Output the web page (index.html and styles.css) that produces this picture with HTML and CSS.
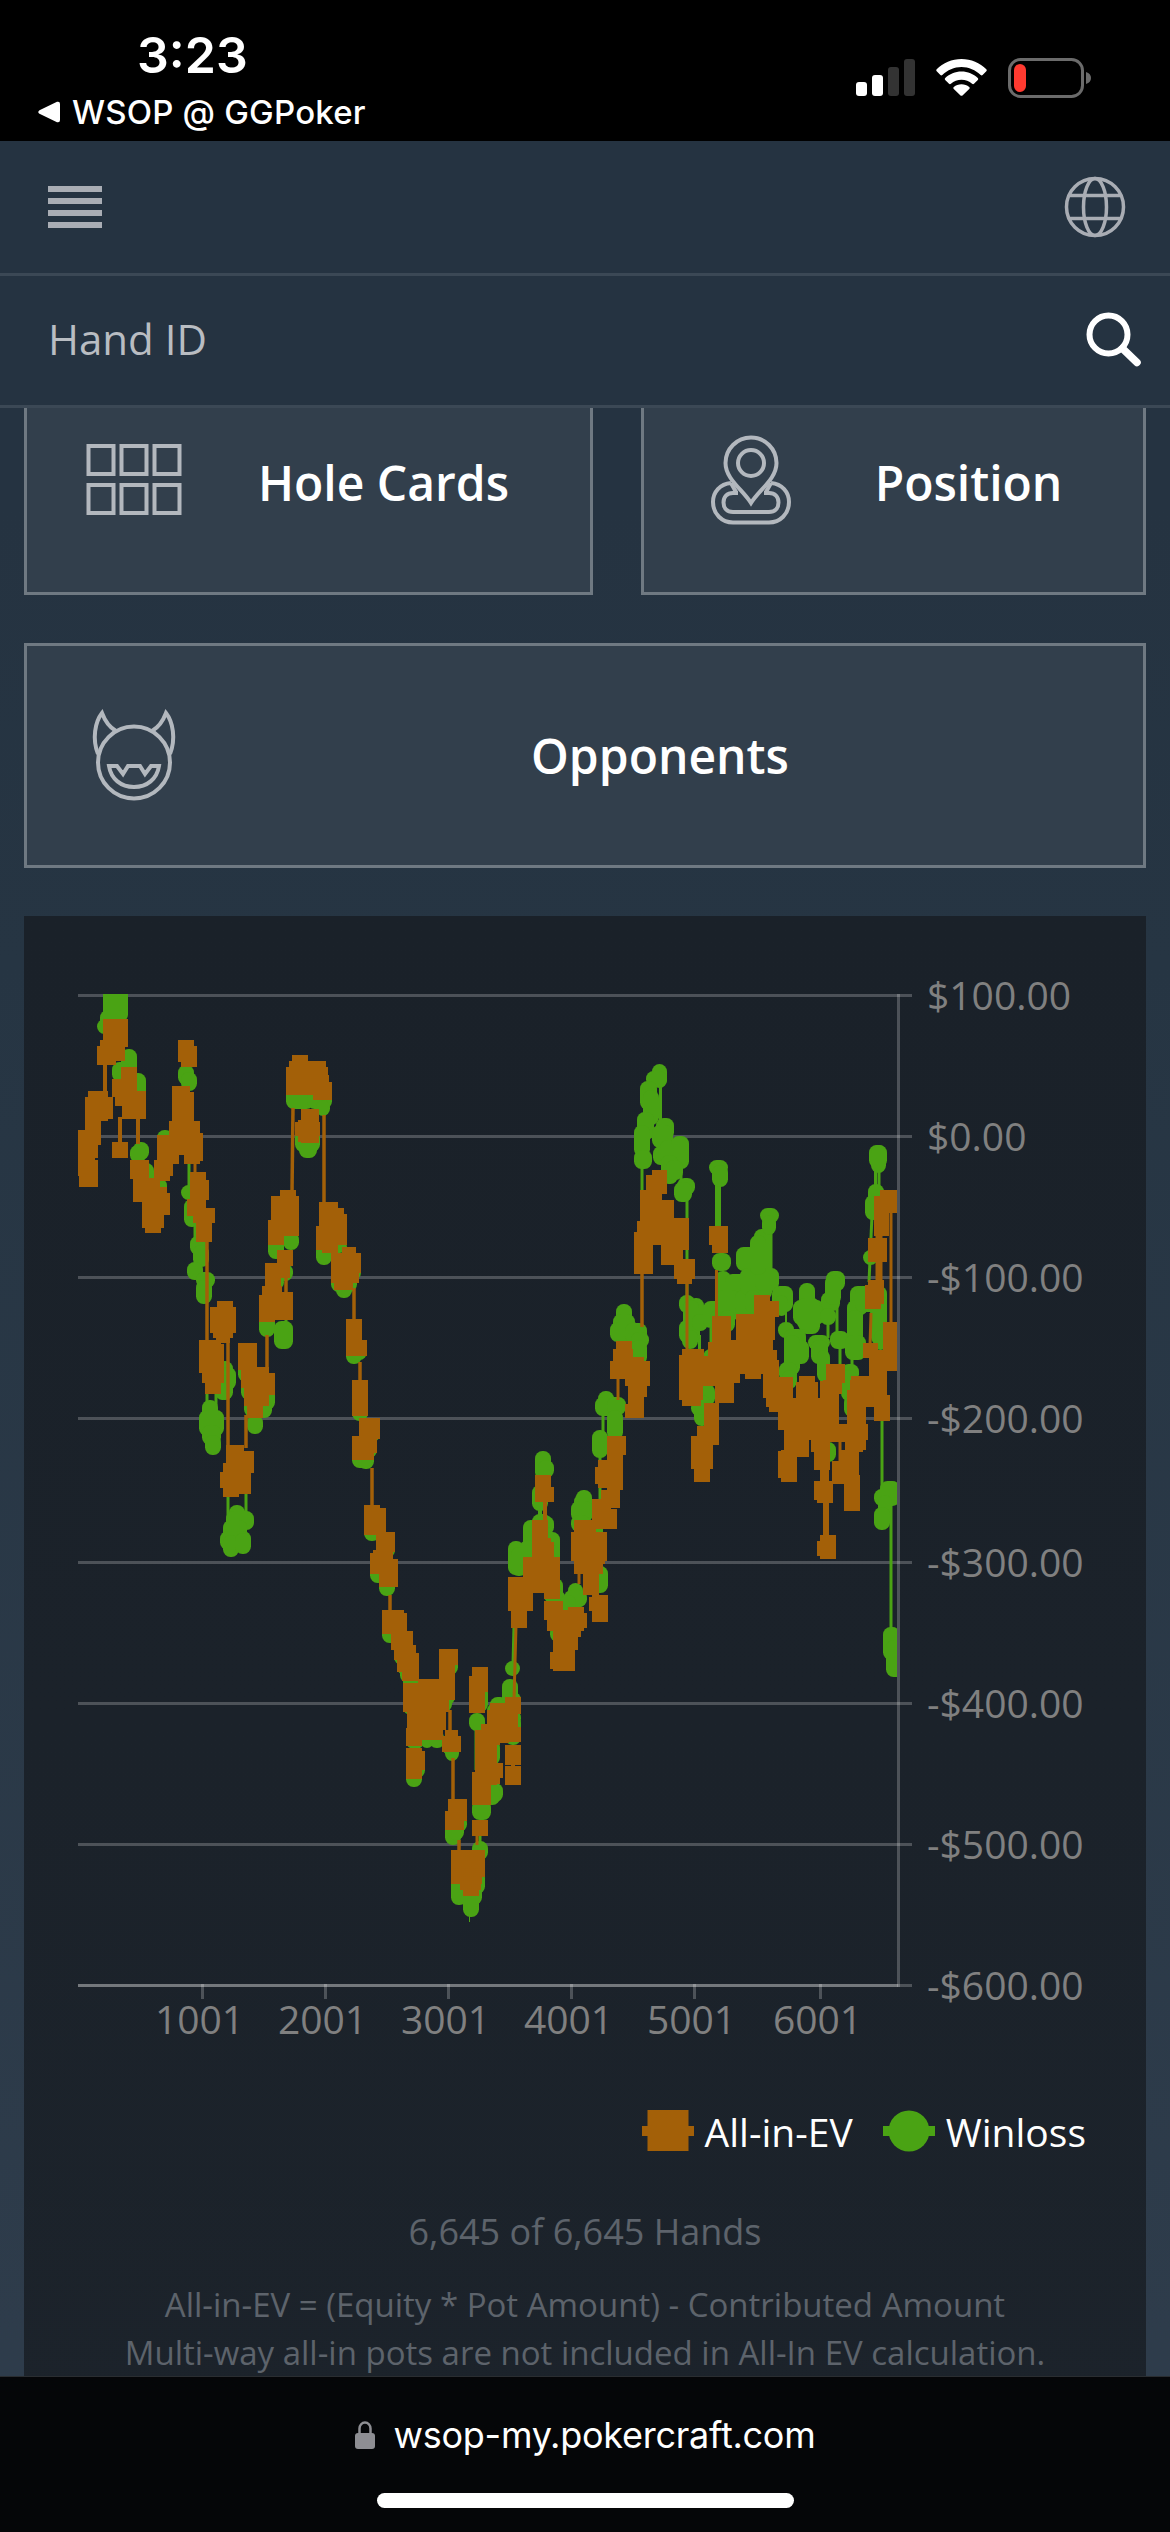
FILE: index.html
```html
<!DOCTYPE html>
<html lang="en">
<head>
    <meta charset="UTF-8">
    <meta name="viewport" content="width=device-width, initial-scale=1.0">
    <title>PokerCraft</title>
    <link rel="stylesheet" href="styles.css">
</head>
<body>

<!-- Status bar -->
<div class="status-bar">
    <div class="status-left">
        <div class="clock">3:23</div>
        <div class="back-app">
            <svg width="22" height="22" viewBox="0 0 22 22"><path d="M1.5 9.2 19 .8Q22 0 22 3v16q0 3-3 2.200L1.500 12.800Q-1 11 1.500 9.200z" fill="#fff"/></svg>
            <span>WSOP @ GGPoker</span>
        </div>
    </div>
    <div class="status-icons">
        <svg width="59" height="38" viewBox="0 0 59 38" fill="#fff">
            <rect x="0" y="24" width="11" height="14" rx="3"/>
            <rect x="16" y="17" width="11" height="21" rx="3"/>
            <rect x="32" y="9" width="11" height="29" rx="3" fill="#333"/>
            <rect x="48" y="1" width="11" height="37" rx="3" fill="#333"/>
        </svg>
        <svg width="51" height="38" viewBox="0 0 51 38" fill="#fff">
            <path d="M25.500 1C35 1 44 4.800 50.300 11.300q.9 1 0 2l-3.700 3.700q-.9.900-1.900 0C39.500 12 32.800 9 25.500 9S11.500 12 6.300 17q-1 .9-1.900 0L.7 13.300q-.9-1 0-2C7 4.800 16 1 25.500 1z"/>
            <path d="M25.500 13.500c6.200 0 12 2.400 16.300 6.500q1 1 0 2l-3.800 3.800q-.9.900-1.900 0c-2.900-2.600-6.600-4.100-10.600-4.100s-7.700 1.500-10.600 4.100q-1 .9-1.900 0L9.200 22q-1-1 0-2c4.300-4.100 10.100-6.500 16.300-6.500z"/>
            <path d="M25.500 26.200c2.900 0 5.600 1 7.700 2.800q1 .9 0 1.900l-6.700 6.500q-1 .9-2 0l-6.700-6.500q-1-1 0-1.900c2.100-1.800 4.800-2.800 7.700-2.800z"/>
        </svg>
        <svg width="84" height="40" viewBox="0 0 84 40">
            <rect x="1.500" y="1.500" width="73" height="37" rx="11" fill="none" stroke="#6b6b6b" stroke-width="3"/>
            <path d="M78 14q5 1.500 5 6t-5 6z" fill="#6b6b6b"/>
            <rect x="6" y="6" width="12" height="28" rx="6" fill="#ff3a30"/>
        </svg>
    </div>
</div>

<header class="top-bar">
    <div class="menu-btn"><i></i><i></i><i></i><i></i></div>
    <svg width="62" height="62" viewBox="0 0 62 62" fill="none" stroke="#a9adb4" stroke-width="3.500">
        <circle cx="31" cy="31" r="28.500"/>
        <ellipse cx="31" cy="31" rx="11.500" ry="28.500"/>
        <path d="M5 19.500h52M5 42.500h52"/>
    </svg>
</header>

<div class="search-bar">
    <span>Hand ID</span>
    <svg width="56" height="56" viewBox="0 0 56 56" fill="none" stroke="#fff">
        <circle cx="23.500" cy="23.500" r="19" stroke-width="6"/>
        <path d="M37.500 37.500 52 51.500" stroke-width="7.500" stroke-linecap="round"/>
    </svg>
</div>

<main class="content">
    <div class="cards">
        <div class="card">
            <svg class="card-icon" viewBox="0 0 96 96">
                <rect x="2.500" y="14" width="25" height="28"/>
                <rect x="35.500" y="14" width="25" height="28"/>
                <rect x="68.500" y="14" width="25" height="28"/>
                <rect x="2.500" y="53" width="25" height="28"/>
                <rect x="35.500" y="53" width="25" height="28"/>
                <rect x="68.500" y="53" width="25" height="28"/>
            </svg>
            <span>Hole Cards</span>
        </div>
        <div class="card">
            <svg class="card-icon" viewBox="0 0 96 96">
                <path d="M48 71C40 58 22.500 47 22.500 31a25.500 25.500 0 0 1 51 0C73.500 47 56 58 48 71z"/>
                <circle cx="48" cy="31" r="13"/>
                <path d="M28 51C17 52 10 60 10 70c0 12 9 20.500 20 20.500h36c11 0 20-8.500 20-20.500 0-10-7-18-18-19"/>
                <path d="M35 61h-5c-6 0-9.500 4-9.500 9.500S24 80 30 80h36c6 0 9.500-4 9.500-9.500S72 61 66 61h-5M28 51l5 9M68 51l-5 9"/>
            </svg>
            <span>Position</span>
        </div>
        <div class="card wide">
            <svg class="card-icon" viewBox="0 0 96 96">
                <circle cx="48" cy="57.500" r="36"/>
                <path d="M12 49C6 34 9 17 16 8c3 8 7 14 14 18M84 49c6-15 3-32-4-41-3 8-7 14-14 18"/>
                <path d="M23 61h8l6 8 5-8h12l5 8 6-8h8c-2 13-12 21-25 21S25 74 23 61z"/>
            </svg>
            <span>Opponents</span>
        </div>
    </div>

    <section class="chart-panel">
        <svg id="chart" width="1050" height="1110" viewBox="0 0 1050 1110">
            <defs><clipPath id="plot"><rect x="18" y="24" width="819" height="993"/></clipPath></defs>
            <g id="grid"></g>
            <g clip-path="url(#plot)" id="series"></g>
        </svg>
        <div class="legend">
            <div class="legend-item">
                <svg width="52" height="42" viewBox="0 0 52 42" fill="#a36008"><path d="M0 16h52v10H0z"/><path d="M5.500 0h41v41h-41z"/></svg>
                <span>All-in-EV</span>
            </div>
            <div class="legend-item">
                <svg width="52" height="42" viewBox="0 0 52 42" fill="#4aa314"><path d="M0 16h52v10H0z"/><circle cx="26" cy="21" r="20.500"/></svg>
                <span>Winloss</span>
            </div>
        </div>
        <p class="hands">6,645 of 6,645 Hands</p>
        <p class="note">All-in-EV = (Equity * Pot Amount) - Contributed Amount<br>Multi-way all-in pots are not included in All-In EV calculation.</p>
    </section>
</main>

<footer class="browser-bar">
    <div class="url">
        <svg width="21" height="28" viewBox="0 0 21 28"><rect x="0" y="12" width="20" height="16" rx="3" fill="#8e8e93"/><path d="M4.500 13V7.500a5.500 6 0 0 1 11 0V13" fill="none" stroke="#8e8e93" stroke-width="2.500"/></svg>
        <span>wsop-my.pokercraft.com</span>
    </div>
    <div class="home-indicator"></div>
</footer>

<script>
    const yAxis = [
        ["$100.00", 25.5], ["$0.00", 166.5], ["-$100.00", 307.5], ["-$200.00", 448.5],
        ["-$300.00", 592.5], ["-$400.00", 733.5], ["-$500.00", 874.5], ["-$600.00", 1015.5]
    ];
    const xAxis = [["1001", 142.5], ["2001", 265.5], ["3001", 388.5], ["4001", 511.5], ["5001", 634.5], ["6001", 760.5]];

    // marker areas: left, top, right, bottom
    const winloss = [
        [43,10,68,52],[37,49,55,64],[40,40,66,60],[61,79,77,110],[52,92,70,112],[70,103,86,128],
        [73,172,89,190],[70,175,86,193],[78,193,94,215],[90,208,107,228],[97,160,113,180],
        [118,95,134,115],[121,102,137,121],[121,215,137,230],[124,229,140,257],[130,266,146,285],[133,275,149,297],
        [127,292,143,310],[136,302,155,318],[136,310,152,334],[157,391,173,430],[160,397,176,420],[155,405,170,430],
        [142,430,158,460],[139,440,164,466],[142,455,161,475],[145,465,161,485],
        [169,535,185,560],[166,541,194,560],[163,550,187,575],[160,561,191,580],[163,565,179,587],[175,563,191,584],
        [178,386,194,412],[181,405,197,430],[187,445,203,464],[199,415,215,440],[196,430,212,448],[184,425,200,447],
        [199,340,215,367],[214,351,233,379],[217,294,233,311],[208,305,224,320],[208,266,224,289],[223,262,239,280],
        [226,115,254,139],[247,120,272,139],[256,130,270,146],[235,160,260,182],[239,170,257,188],
        [256,273,272,295],[262,270,282,285],[271,270,287,283],[271,300,297,322],[276,310,292,328],[281,296,301,310],
        [286,375,302,394],[291,375,307,390],[292,430,308,451],[299,455,320,472],[292,475,312,498],[298,480,314,499],[302,470,317,488],
        [304,550,320,571],[319,570,335,588],[310,592,326,613],[319,597,335,626],[322,595,338,616],
        [322,650,338,673],[331,665,347,682],[334,675,350,695],[337,685,353,705],[340,695,356,713],[343,700,359,720],
        [343,720,359,745],[347,735,363,753],[346,760,364,779],[360,762,374,778],[369,762,385,778],[379,720,395,735],
        [376,725,392,742],[370,740,386,754],[382,685,398,705],[346,790,362,817],[349,790,365,808],[382,770,401,785],[385,770,399,791],
        [385,845,401,875],[391,845,407,862],[388,850,404,870],[391,905,407,935],[409,900,425,924],[400,910,422,935],[403,910,419,947],
        [412,871,428,890],[409,743,425,761],[412,715,428,742],[430,727,448,745],[427,733,443,750],[442,709,458,735],[445,722,461,740],
        [445,691,460,706],[445,740,461,756],[445,745,461,775],[426,770,440,795],[427,813,443,832],[424,815,440,835],[412,830,431,850],
        [448,571,464,605],[451,577,467,606],[463,550,479,590],[460,570,475,600],[478,546,494,565],[472,544,491,560],[483,562,500,590],[484,575,500,595],
        [472,515,488,541],[475,481,491,510],[478,490,494,508],[487,608,503,632],[484,620,505,633],[508,613,523,640],[504,620,527,637],
        [500,625,516,642],[490,655,506,672],[514,524,532,545],[516,520,532,540],[511,531,533,552],[511,545,530,562],[527,550,543,572],[532,596,548,623],
        [532,460,548,488],[538,421,554,440],[535,427,563,446],[547,427,566,445],[547,440,563,470],
        [556,334,572,365],[553,344,575,365],[550,352,580,372],[565,353,587,373],[571,362,589,378],[571,370,587,395],
        [592,94,607,118],[586,101,607,117],[580,111,597,140],[583,120,599,155],[577,142,594,170],[574,155,590,187],[574,180,592,199],
        [596,148,614,170],[592,155,613,178],[593,176,620,195],[600,170,618,195],[611,166,629,199],[601,185,618,214],[606,190,623,210],
        [617,208,635,225],[614,212,632,232],[619,325,635,343],[628,328,644,360],[623,330,639,360],[619,350,640,373],[622,360,638,379],
        [632,344,648,361],[643,331,668,358],[650,340,668,363],[643,379,659,400],[631,430,646,446],[634,420,650,456],[640,414,655,436],[635,425,650,445],
        [649,190,668,205],[652,195,668,217],[652,283,671,301],[655,301,671,335],[665,304,690,340],[655,320,680,350],[660,340,675,362],[675,320,700,345],
        [676,277,697,301],[694,259,712,330],[700,238,719,253],[702,245,716,265],[680,298,712,325],[695,298,719,321],[685,320,700,343],[690,265,706,305],
        [712,316,733,342],[715,325,728,346],[718,352,734,368],[724,359,746,380],[728,370,749,394],[724,365,740,405],[719,392,737,412],[722,400,737,419],
        [739,313,755,340],[733,330,764,355],[739,340,760,364],[737,328,760,360],[748,365,770,380],[751,370,768,394],[757,380,770,412],
        [761,322,780,341],[766,301,785,321],[765,305,781,335],[760,338,776,355],[770,361,789,379],[790,316,808,345],[787,330,803,365],[787,340,803,380],
        [785,365,806,390],[781,394,799,412],[781,400,797,431],[784,425,800,447],[759,445,770,455],[760,472,776,492],[795,316,820,342],
        [808,330,824,345],[811,316,827,345],[811,325,827,375],[814,360,827,380],[803,280,818,295],[805,225,821,250],[808,214,824,235],[809,175,827,198],[811,175,826,203],
        [814,519,835,536],[820,511,840,536],[818,525,832,550],[814,537,830,560],[823,657,840,690],[826,670,845,707]
    ];
    const allInEv = [
        [18,160,41,175],[18,160,38,188],[18,175,35,206],[19,190,38,217],[28,121,48,151],[47,127,53,149],[25,127,41,175],
        [43,49,68,77],[40,70,65,91],[37,76,56,95],[52,172,68,188],[61,97,77,122],[52,109,67,127],[55,121,86,136],[62,134,86,149],
        [70,190,89,209],[73,208,100,232],[92,217,107,230],[82,223,110,245],[82,230,104,258],[85,250,101,263],
        [97,165,113,196],[94,190,110,211],[94,190,113,206],[109,157,124,185],[100,166,119,194],[112,116,130,161],[113,122,134,152],
        [109,151,140,184],[124,163,143,191],[124,183,140,194],[118,70,134,92],[121,76,137,97],
        [130,202,146,245],[130,210,149,230],[127,229,143,246],[133,238,155,253],[136,247,152,272],
        [139,370,161,403],[145,374,164,395],[142,395,164,413],[145,410,161,424],[157,331,173,345],[150,337,176,363],[153,355,173,368],[156,360,170,373],
        [166,475,184,490],[166,481,194,503],[163,493,191,513],[160,502,191,518],[163,515,191,524],[163,520,179,527],
        [178,373,197,400],[181,397,209,418],[184,403,215,425],[184,420,209,436],[187,430,203,448],
        [199,325,230,350],[199,330,215,352],[202,316,222,335],[205,293,221,330],[205,293,230,308],[217,280,233,296],[220,322,233,350],
        [211,226,239,266],[220,220,236,230],[208,250,224,275],[232,85,248,95],[229,91,266,105],[226,97,268,122],[226,115,253,125],[253,105,269,130],[257,112,272,130],
        [241,139,259,173],[235,152,260,166],[238,150,259,172],[259,232,278,245],[259,238,284,260],[256,256,274,280],[259,244,287,275],[262,270,278,283],
        [282,277,296,290],[271,283,301,303],[271,295,299,313],[274,305,293,320],[286,349,302,386],[289,370,307,386],[292,410,308,446],
        [299,448,320,469],[292,466,317,483],[292,475,314,490],[304,535,320,565],[304,538,326,563],[316,562,335,582],[310,583,330,604],[313,580,333,600],[319,589,338,617],
        [322,640,344,664],[325,643,347,663],[331,661,353,680],[334,675,356,690],[337,683,359,702],[342,700,359,711],
        [343,713,380,740],[358,709,395,728],[379,679,398,695],[379,679,395,730],[343,713,389,742],[347,740,386,760],[346,758,383,770],[346,768,362,776],
        [346,778,362,809],[349,781,365,800],[382,766,401,782],[385,760,398,770],[388,829,407,851],[385,841,404,860],
        [391,880,425,907],[391,905,422,914],[400,912,421,920],[403,918,419,926],[412,697,428,722],[409,706,425,743],
        [421,754,440,775],[415,760,437,803],[412,802,437,815],[412,812,431,835],[415,793,443,808],[434,793,440,814],
        [430,733,460,743],[427,740,449,773],[445,727,461,744],[427,744,458,758],[445,757,461,772],[445,775,461,795],[445,796,461,815],
        [412,850,428,866],[451,640,467,658],[448,607,473,641],[463,587,484,623],[472,550,488,588],[475,568,491,590],[478,572,494,590],
        [470,587,500,623],[484,620,500,629],[475,505,491,532],[478,517,494,532],
        [484,631,503,650],[487,640,524,661],[493,643,527,658],[508,637,524,650],[493,660,521,667],[493,665,518,680],[490,682,515,699],[493,675,515,701],
        [529,627,547,641],[532,625,548,652],[511,562,547,591],[514,550,536,565],[514,590,543,604],[523,590,545,594],[523,600,539,625],
        [532,529,551,556],[535,539,557,559],[541,520,560,538],[547,490,563,520],[547,466,566,485],[535,497,560,514],[538,490,560,518],[547,480,563,500],
        [556,371,572,380],[553,379,573,400],[550,391,587,409],[571,387,584,410],[565,391,590,416],[568,405,587,427],[565,434,584,448],[568,420,584,448],
        [574,262,593,304],[577,251,598,275],[580,220,602,265],[586,205,607,224],[592,200,607,212],[598,230,614,275],[602,248,629,280],[601,275,623,295],
        [614,289,635,309],[617,300,632,314],[619,385,643,430],[622,379,644,392],[622,425,641,436],
        [637,386,656,416],[652,346,671,372],[648,372,670,415],[655,370,680,413],[655,405,674,433],[676,344,715,370],[679,352,713,404],
        [694,325,710,345],[694,331,719,347],[670,370,690,395],[685,400,701,409],[709,380,717,400],[703,390,719,428],[706,407,733,437],[709,432,727,442],
        [644,433,659,475],[637,456,655,475],[631,466,653,499],[634,490,650,512],[649,256,668,275],[652,270,668,283],
        [718,437,734,460],[719,407,733,450],[739,406,755,420],[736,412,758,440],[733,428,765,457],[724,450,749,487],[718,481,737,508],[721,480,737,512],
        [763,410,782,424],[766,394,785,413],[760,411,779,454],[749,454,770,470],[770,454,787,472],[751,465,770,482],[754,480,770,500],
        [760,497,769,513],[754,511,773,530],[757,520,773,533],[760,565,776,589],[757,571,775,586],
        [791,406,818,437],[787,420,803,460],[790,410,806,480],[785,454,808,470],[785,465,803,482],[772,491,797,514],[779,484,798,500],[781,480,799,507],[784,505,800,541],
        [803,406,827,436],[816,380,827,440],[814,425,830,451],[803,373,818,388],[809,388,820,406],[805,315,821,339],[808,310,824,334],
        [808,268,827,292],[814,226,829,266],[814,228,837,243],[820,220,837,243],[823,352,837,396],[827,390,837,401]
    ];
    // connectors between marker areas: x1, y1, x2, y2, width
    const winlossLines = [
        [129,190,129,218,3],[135,255,135,270,3],[147,420,147,435,3],[156,420,156,435,3],[168,520,168,548,3],[186,520,186,548,3],
        [409.5,940,409.5,952,1],[420,860,420,875,3],[416,755,416,800,3],[454,655,453,695,3],[480,535,480,550,4],[540,510,540,570,3],
        [543,440,543,465,3],[540,484,540,497,3],[582,190,582,222,3],[600.5,112,600.5,155,3],[621,195,621,212,3],[627,228,627,335,3],
        [639.5,365,639.5,385,3],[651,358,651,385,3],[658,210,658,260,6],[711,250,711,320,3],[726,340,726,355,2],[768,350,768,368,3],[777,335,777,365,3],
        [780,378,780,398,3],[792,388,792,398,3],[812,245,809,312,3],[815.5,198,815.5,218,3],[819,198,819,218,3],[818.5,262,818.5,272,3],
        [822,450,822,520,3],[831,535,831,662,3],[226,345,226,355,3]
    ];
    const evLines = [
        [45,92,45,124,4],[60,147,60,174,4],[78,147,78,174,4],[135,190,135,204,3],[147,270,147,372,3.5],[168,370,168,478,3.5],[186,445,186,478,3.5],
        [207,365,207,402,3.5],[226,305,226,324,3.5],[233,138,232,222,3.5],[264,145,264,234,3.5],[294,318,294,352,3.5],[300,392,300,412,3.5],
        [312,498,312,537,3.5],[330,625,330,642,3.5],[390,740,390,762,3.5],[393,788,393,832,3.5],[399,870,399,882,3.5],[417,864,417,875,3],
        [453,793,453,798,4],[456,655,454,730,3],[485,530,485,552,4],[519,602,519,614,3],[558,405,558,430,3],[582,300,582,357,3.5],[627,312,627,382,3],
        [656.5,300,656.5,348,3],[766,530,766,567,6],[777.5,430,777.5,456,3],[780,470,780,492,3],[811,343,810,376,3],[819,265,819,312,7],[831,240,831,355,3]
    ];

    function rects(list, color, radius) {
        return list.map(([l, t, r, b]) =>
            `<rect x="${l}" y="${t}" width="${r - l}" height="${b - t}" rx="${radius}" fill="${color}"/>`).join('');
    }

    function lines(list, color) {
        return list.map(([x1, y1, x2, y2, w]) =>
            `<line x1="${x1}" y1="${y1}" x2="${x2}" y2="${y2}" stroke="${color}" stroke-width="${w}"/>`).join('');
    }

    function drawGrid() {
        let out = '';
        yAxis.forEach(([label, y]) => {
            out += `<line class="grid-line" x1="18" y1="${y}" x2="852" y2="${y}"/>`;
            out += `<text x="867" y="${y + 14}">${label}</text>`;
        });
        out += '<line class="grid-line" x1="838.5" y1="24" x2="838.5" y2="1017"/>';
        out += '<line class="grid-line" x1="18" y1="1015.5" x2="838" y2="1015.5"/>';
        xAxis.forEach(([label, x]) => {
            out += `<line class="grid-line" x1="${x}" y1="1014" x2="${x}" y2="1029"/>`;
            out += `<text x="${x - 3}" y="1064" text-anchor="middle">${label}</text>`;
        });
        document.getElementById('grid').innerHTML = out;
    }

    function drawSeries() {
        document.getElementById('series').innerHTML =
            lines(winlossLines, '#4aa314') + rects(winloss, '#4aa314', 7.5) +
            lines(evLines, '#a36008') + rects(allInEv, '#a36008', 0);
    }

    drawGrid();
    drawSeries();
</script>

</body>
</html>
```
FILE: styles.css
```css
* {
    margin: 0;
    padding: 0;
    box-sizing: border-box;
}
body {
    width: 1170px;
    height: 2532px;
    display: flex;
    flex-direction: column;
    overflow: hidden;
    background: linear-gradient(#253341 20%, #263543 38%, #2e3c4b 92%);
    color: #fff;
    font-family: 'Open Sans', 'Noto Sans', sans-serif;
}
svg {
    display: block;
    flex-shrink: 0;
}
.status-bar {
    height: 141px;
    flex-shrink: 0;
    background: #000;
    display: flex;
    justify-content: space-between;
    padding: 24px 78px 0 38px;
    font-family: 'Inter', sans-serif;
}
.clock {
    padding-left: 99px;
    font-size: 50px;
    line-height: 62px;
    font-weight: 600;
}
.back-app {
    display: flex;
    align-items: center;
    gap: 12px;
    margin-top: 6px;
    font-size: 33px;
    line-height: 40px;
    font-weight: 500;
    letter-spacing: 0.2px;
}
.status-icons {
    display: flex;
    align-items: flex-start;
    gap: 21px;
    padding-top: 34px;
}
.top-bar {
    height: 135px;
    flex-shrink: 0;
    display: flex;
    justify-content: space-between;
    align-items: center;
    padding: 0 44px 0 48px;
    background: #253341;
    border-bottom: 3px solid #3b4855;
}
.menu-btn {
    display: flex;
    flex-direction: column;
    gap: 6px;
}
.menu-btn i {
    width: 54px;
    height: 6px;
    background: #a9adb4;
}
.search-bar {
    height: 132px;
    flex-shrink: 0;
    display: flex;
    justify-content: space-between;
    align-items: center;
    padding: 0 29px 4px 48px;
    background: #253341;
    border-bottom: 3px solid #3b4855;
    font-size: 42px;
    color: #b9bdc2;
}
.content {
    flex: 1;
    min-height: 0;
    overflow: hidden;
    padding: 0 24px;
}
.cards {
    display: grid;
    grid-template-columns: 569px 505px;
    gap: 48px;
    margin: -38px 0 48px;
}
.card {
    height: 225px;
    display: flex;
    align-items: center;
    background: #323f4c;
    border: 3px solid #6f7982;
    font-size: 48px;
    font-weight: 600;
}
.card.wide {
    grid-column: 1 / 3;
}
.card span {
    flex: 1;
    text-align: center;
}
.card-icon {
    width: 96px;
    height: 96px;
    margin: 0 -5px 6px 59px;
    fill: none;
    stroke: #b3b8be;
    stroke-width: 4;
}
.chart-panel {
    height: 1600px;
    padding: 54px 36px 0;
    background: linear-gradient(#1a2129, #1c232b);
}
#chart text {
    font-size: 39px;
    fill: #808080;
}
.grid-line {
    stroke: rgba(255, 255, 255, 0.22);
    stroke-width: 3;
}
.legend {
    display: flex;
    justify-content: flex-end;
    gap: 30px;
    height: 42px;
    margin-top: 30px;
    padding-right: 24px;
}
.legend-item {
    display: flex;
    align-items: center;
    gap: 11px;
    font-size: 39px;
}
.hands {
    margin-top: 55px;
    text-align: center;
    font-size: 36px;
    line-height: 50px;
    color: #5d636b;
}
.note {
    margin: 24px -20px 0;
    text-align: center;
    font-size: 33px;
    line-height: 48px;
    color: #5d636b;
}
.browser-bar {
    height: 156px;
    flex-shrink: 0;
    display: flex;
    flex-direction: column;
    align-items: center;
    justify-content: space-between;
    padding: 34px 0 24px;
    background: #050608;
    border-top: 1px solid #2a2d31;
    font-family: 'Inter', sans-serif;
}
.url {
    display: flex;
    align-items: center;
    gap: 18px;
    font-size: 36px;
    line-height: 48px;
    letter-spacing: -0.25px;
}
.home-indicator {
    width: 417px;
    height: 15px;
    border-radius: 8px;
    background: #fff;
}
```
